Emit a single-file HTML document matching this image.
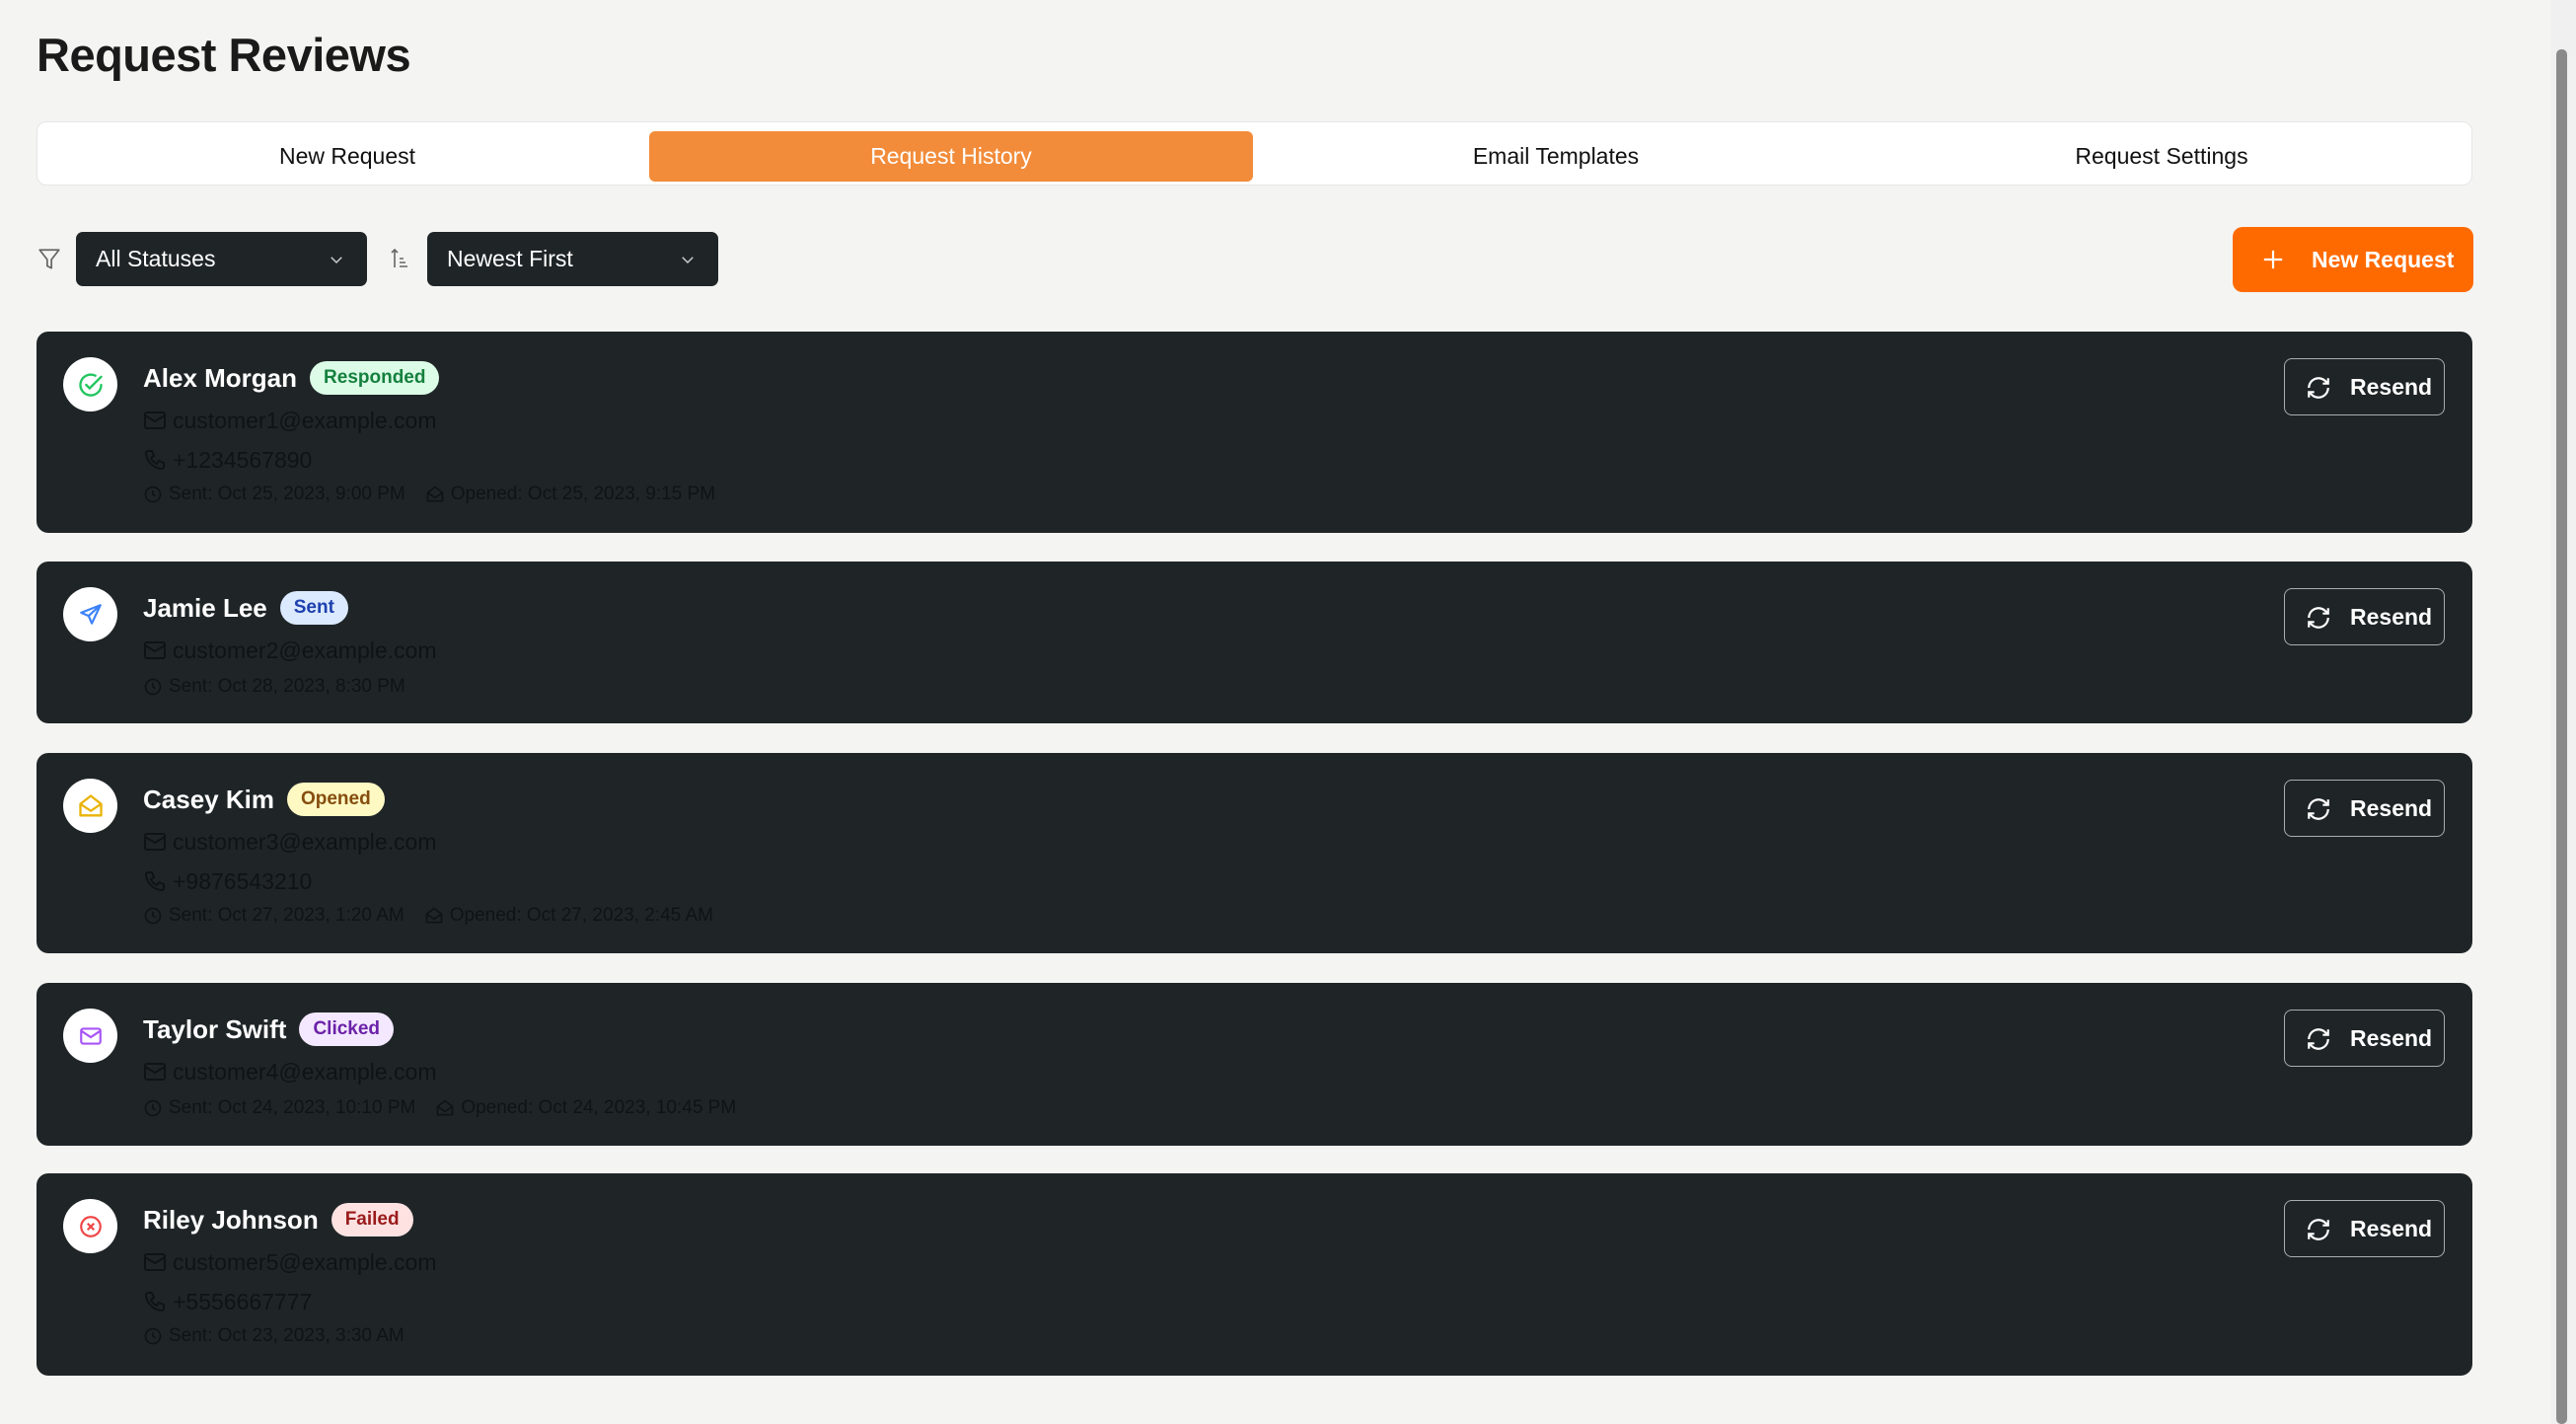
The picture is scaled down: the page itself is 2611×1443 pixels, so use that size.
<!DOCTYPE html>
<html><head><meta charset="utf-8"><style>
*{box-sizing:border-box;margin:0;padding:0}
body{width:2611px;height:1443px;background:#f4f4f2;font-family:"Liberation Sans",sans-serif;position:relative;overflow:hidden;color:#111}
.abs{position:absolute}
h1{position:absolute;left:37px;top:28px;font-size:47px;font-weight:700;color:#1a1a1a;letter-spacing:-0.5px}
.tabs{left:37px;top:123px;width:2469px;height:65px;background:#fff;border:1px solid #e6e6e6;border-radius:10px}
.tab{position:absolute;top:9px;height:51px;width:612px;display:flex;align-items:center;justify-content:center;font-size:23px;color:#111;border-radius:6px}
.tab.on{background:#f28c3a;color:#fff}
.sel{top:235px;height:55px;width:295px;background:#1f2527;border-radius:7px;color:#fff;font-size:23px;display:flex;align-items:center;padding-left:20px}
.sel svg{position:absolute;right:22px;top:19px}
.btn{left:2263px;top:230px;width:244px;height:66px;background:#ff6a00;border-radius:10px;color:#fff;font-size:23px;font-weight:700;display:flex;align-items:center}
.card{left:37px;width:2469px;background:#1f2527;border-radius:12px}
.av{position:absolute;left:27px;top:26px;width:55px;height:55px;border-radius:50%;background:#fff;display:flex;align-items:center;justify-content:center}
.nm{position:absolute;left:108px;top:30px;height:34px;display:flex;align-items:center;color:#fff;font-size:26px;font-weight:600}
.bd{margin-left:13px;height:34px;padding:0 14px;border-radius:17px;font-size:19px;font-weight:600;display:flex;align-items:center}
.row{position:absolute;left:108px;display:flex;align-items:center;color:#0f1314;font-size:23px}
.row svg{margin-right:6px}
.meta{font-size:19px}
.rs{position:absolute;right:28px;top:27px;width:163px;height:58px;border:1.5px solid #a9adae;border-radius:8px;color:#fff;font-size:23px;font-weight:600;display:flex;align-items:center}
.rs svg{position:absolute;left:21px;top:16px}
.rs span{position:absolute;left:66px}
</style></head><body>
<h1>Request Reviews</h1>
<div class="abs tabs">
<div class="tab" style="left:8px">New Request</div>
<div class="tab on" style="left:620px">Request History</div>
<div class="tab" style="left:1233px">Email Templates</div>
<div class="tab" style="left:1847px">Request Settings</div>
</div>
<svg class="abs" style="left:37px;top:250px" width="26" height="26" viewBox="0 0 24 24" fill="none" stroke="#666" stroke-width="1.6" stroke-linejoin="round"><path d="M3 3h18l-7 9v8l-4-2v-6z"/></svg>
<div class="abs sel" style="left:77px">All Statuses<svg width="18" height="18" viewBox="0 0 24 24" fill="none" stroke="#ccc" stroke-width="2"><path d="M5 9l7 7 7-7"/></svg></div>
<svg class="abs" style="left:394px;top:250px" width="24" height="24" viewBox="0 0 24 24" fill="none" stroke="#666" stroke-width="1.6"><path d="M6 21V3M3 6l3-3 3 3M11 12h4M11 16h6M11 20h8"/></svg>
<div class="abs sel" style="left:433px">Newest First<svg width="18" height="18" viewBox="0 0 24 24" fill="none" stroke="#ccc" stroke-width="2"><path d="M5 9l7 7 7-7"/></svg></div>
<div class="abs btn"><svg style="position:absolute;left:30px;top:22px" width="22" height="22" viewBox="0 0 24 24" stroke="#fff" stroke-width="2.4"><path d="M12 2v20M2 12h20"/></svg><span style="position:absolute;left:80px">New Request</span></div>

<div class="abs card" style="top:336px;height:204px">
<div class="av"><svg width="28" height="28" viewBox="0 0 24 24" fill="none" stroke="#22c55e" stroke-width="2" stroke-linecap="round"><path d="M21 12a9 9 0 1 1-5-8"/><path d="M8 12l3 3 10-10"/></svg></div>
<div class="nm">Alex Morgan<span class="bd" style="background:#dcfce7;color:#15803d">Responded</span></div>
<div class="row" style="top:77px;height:26px"><svg width="24" height="24" viewBox="0 0 24 24" fill="none" stroke="#0f1314" stroke-width="2"><rect x="2" y="4" width="20" height="16" rx="2"/><path d="M2 7l10 6 10-6"/></svg>customer1@example.com</div>
<div class="row" style="top:117px;height:26px"><svg width="24" height="24" viewBox="0 0 24 24" fill="none" stroke="#0f1314" stroke-width="2"><path d="M5 3h4l2 5-3 2a11 11 0 0 0 6 6l2-3 5 2v4a2 2 0 0 1-2 2A17 17 0 0 1 3 5a2 2 0 0 1 2-2z"/></svg>+1234567890</div>
<div class="row meta" style="top:154px;height:22px"><svg width="20" height="20" viewBox="0 0 24 24" fill="none" stroke="#0f1314" stroke-width="2"><circle cx="12" cy="12" r="9"/><path d="M12 7v5l3 2"/></svg>Sent: Oct 25, 2023, 9:00 PM<svg style="margin-left:20px" width="20" height="20" viewBox="0 0 24 24" fill="none" stroke="#0f1314" stroke-width="2"><path d="M3 10l9-7 9 7v10H3z M3 10l9 6 9-6"/></svg>Opened: Oct 25, 2023, 9:15 PM</div>
<div class="rs"><svg width="26" height="26" viewBox="0 0 24 24" fill="none" stroke="#fff" stroke-width="2"><path d="M3 12a9 9 0 0 1 15-6.7L21 8M21 3v5h-5M21 12a9 9 0 0 1-15 6.7L3 16M3 21v-5h5"/></svg><span>Resend</span></div>
</div>

<div class="abs card" style="top:569px;height:164px">
<div class="av"><svg width="26" height="26" viewBox="0 0 24 24" fill="none" stroke="#3b82f6" stroke-width="2" stroke-linejoin="round"><path d="M21 3L3 10l7 3 3 7z M10 13l11-10"/></svg></div>
<div class="nm">Jamie Lee<span class="bd" style="background:#dbeafe;color:#1e40af">Sent</span></div>
<div class="row" style="top:77px;height:26px"><svg width="24" height="24" viewBox="0 0 24 24" fill="none" stroke="#0f1314" stroke-width="2"><rect x="2" y="4" width="20" height="16" rx="2"/><path d="M2 7l10 6 10-6"/></svg>customer2@example.com</div>
<div class="row meta" style="top:116px;height:22px"><svg width="20" height="20" viewBox="0 0 24 24" fill="none" stroke="#0f1314" stroke-width="2"><circle cx="12" cy="12" r="9"/><path d="M12 7v5l3 2"/></svg>Sent: Oct 28, 2023, 8:30 PM</div>
<div class="rs"><svg width="26" height="26" viewBox="0 0 24 24" fill="none" stroke="#fff" stroke-width="2"><path d="M3 12a9 9 0 0 1 15-6.7L21 8M21 3v5h-5M21 12a9 9 0 0 1-15 6.7L3 16M3 21v-5h5"/></svg><span>Resend</span></div>
</div>

<div class="abs card" style="top:763px;height:203px">
<div class="av"><svg width="28" height="28" viewBox="0 0 24 24" fill="none" stroke="#eab308" stroke-width="2" stroke-linejoin="round"><path d="M3 10l9-7 9 7v10H3z M3 10l9 6 9-6"/></svg></div>
<div class="nm">Casey Kim<span class="bd" style="background:#fef9c3;color:#854d0e">Opened</span></div>
<div class="row" style="top:77px;height:26px"><svg width="24" height="24" viewBox="0 0 24 24" fill="none" stroke="#0f1314" stroke-width="2"><rect x="2" y="4" width="20" height="16" rx="2"/><path d="M2 7l10 6 10-6"/></svg>customer3@example.com</div>
<div class="row" style="top:117px;height:26px"><svg width="24" height="24" viewBox="0 0 24 24" fill="none" stroke="#0f1314" stroke-width="2"><path d="M5 3h4l2 5-3 2a11 11 0 0 0 6 6l2-3 5 2v4a2 2 0 0 1-2 2A17 17 0 0 1 3 5a2 2 0 0 1 2-2z"/></svg>+9876543210</div>
<div class="row meta" style="top:154px;height:22px"><svg width="20" height="20" viewBox="0 0 24 24" fill="none" stroke="#0f1314" stroke-width="2"><circle cx="12" cy="12" r="9"/><path d="M12 7v5l3 2"/></svg>Sent: Oct 27, 2023, 1:20 AM<svg style="margin-left:20px" width="20" height="20" viewBox="0 0 24 24" fill="none" stroke="#0f1314" stroke-width="2"><path d="M3 10l9-7 9 7v10H3z M3 10l9 6 9-6"/></svg>Opened: Oct 27, 2023, 2:45 AM</div>
<div class="rs"><svg width="26" height="26" viewBox="0 0 24 24" fill="none" stroke="#fff" stroke-width="2"><path d="M3 12a9 9 0 0 1 15-6.7L21 8M21 3v5h-5M21 12a9 9 0 0 1-15 6.7L3 16M3 21v-5h5"/></svg><span>Resend</span></div>
</div>

<div class="abs card" style="top:996px;height:165px">
<div class="av"><svg width="26" height="26" viewBox="0 0 24 24" fill="none" stroke="#a855f7" stroke-width="2"><rect x="3" y="5" width="18" height="14" rx="2"/><path d="M3 7l9 6 9-6"/></svg></div>
<div class="nm">Taylor Swift<span class="bd" style="background:#f3e8ff;color:#6b21a8">Clicked</span></div>
<div class="row" style="top:77px;height:26px"><svg width="24" height="24" viewBox="0 0 24 24" fill="none" stroke="#0f1314" stroke-width="2"><rect x="2" y="4" width="20" height="16" rx="2"/><path d="M2 7l10 6 10-6"/></svg>customer4@example.com</div>
<div class="row meta" style="top:116px;height:22px"><svg width="20" height="20" viewBox="0 0 24 24" fill="none" stroke="#0f1314" stroke-width="2"><circle cx="12" cy="12" r="9"/><path d="M12 7v5l3 2"/></svg>Sent: Oct 24, 2023, 10:10 PM<svg style="margin-left:20px" width="20" height="20" viewBox="0 0 24 24" fill="none" stroke="#0f1314" stroke-width="2"><path d="M3 10l9-7 9 7v10H3z M3 10l9 6 9-6"/></svg>Opened: Oct 24, 2023, 10:45 PM</div>
<div class="rs"><svg width="26" height="26" viewBox="0 0 24 24" fill="none" stroke="#fff" stroke-width="2"><path d="M3 12a9 9 0 0 1 15-6.7L21 8M21 3v5h-5M21 12a9 9 0 0 1-15 6.7L3 16M3 21v-5h5"/></svg><span>Resend</span></div>
</div>

<div class="abs card" style="top:1189px;height:205px">
<div class="av"><svg width="26" height="26" viewBox="0 0 24 24" fill="none" stroke="#ef4444" stroke-width="2"><circle cx="12" cy="12" r="9"/><path d="M9 9l6 6M15 9l-6 6"/></svg></div>
<div class="nm">Riley Johnson<span class="bd" style="background:#fee2e2;color:#991b1b">Failed</span></div>
<div class="row" style="top:77px;height:26px"><svg width="24" height="24" viewBox="0 0 24 24" fill="none" stroke="#0f1314" stroke-width="2"><rect x="2" y="4" width="20" height="16" rx="2"/><path d="M2 7l10 6 10-6"/></svg>customer5@example.com</div>
<div class="row" style="top:117px;height:26px"><svg width="24" height="24" viewBox="0 0 24 24" fill="none" stroke="#0f1314" stroke-width="2"><path d="M5 3h4l2 5-3 2a11 11 0 0 0 6 6l2-3 5 2v4a2 2 0 0 1-2 2A17 17 0 0 1 3 5a2 2 0 0 1 2-2z"/></svg>+5556667777</div>
<div class="row meta" style="top:154px;height:22px"><svg width="20" height="20" viewBox="0 0 24 24" fill="none" stroke="#0f1314" stroke-width="2"><circle cx="12" cy="12" r="9"/><path d="M12 7v5l3 2"/></svg>Sent: Oct 23, 2023, 3:30 AM</div>
<div class="rs"><svg width="26" height="26" viewBox="0 0 24 24" fill="none" stroke="#fff" stroke-width="2"><path d="M3 12a9 9 0 0 1 15-6.7L21 8M21 3v5h-5M21 12a9 9 0 0 1-15 6.7L3 16M3 21v-5h5"/></svg><span>Resend</span></div>
</div>

<div class="abs" style="left:2586px;top:0;width:25px;height:1443px;background:#f0f0f0"></div>
<div class="abs" style="left:2591px;top:50px;width:11px;height:1393px;background:#8a8a8a;border-radius:5px"></div>
</body></html>
